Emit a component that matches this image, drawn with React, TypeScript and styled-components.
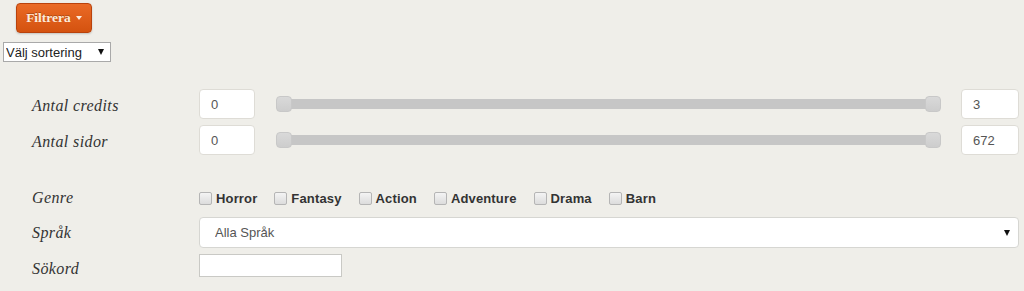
import React from "react";
import styled, { createGlobalStyle } from "styled-components";

const GlobalStyle = createGlobalStyle`
  html, body {
    margin: 0;
    padding: 0;
    background: #efeee9;
  }
`;

const Page = styled.div`
  width: 1024px;
  height: 291px;
  overflow: hidden;
  box-sizing: border-box;
  padding: 3px 5px 0 3px;
`;

const FilterButton = styled.button`
  display: flex;
  align-items: center;
  gap: 5px;
  margin-left: 13px;
  height: 30px;
  width: 76px;
  box-sizing: border-box;
  justify-content: center;
  padding: 0 0 1px;
  border: 1px solid #b9420c;
  border-radius: 4px;
  background: linear-gradient(to bottom, #ea6a26 0%, #d4520f 100%);
  box-shadow: 0 1px 2px rgba(0, 0, 0, 0.18);
  color: #fcebdc;
  font-family: "Liberation Serif", serif;
  font-weight: bold;
  font-size: 13.5px;
  text-shadow: 0 -1px 0 rgba(0, 0, 0, 0.25);
`;

const Caret = styled.span`
  width: 0;
  height: 0;
  border-left: 3.5px solid transparent;
  border-right: 3.5px solid transparent;
  border-top: 4px solid #fcebdc;
`;

const SelectBox = styled.div<{ $wide?: boolean }>`
  display: flex;
  align-items: center;
  box-sizing: border-box;
  background: #fff;
  ${({ $wide }) =>
    $wide
      ? `
    height: 31px;
    border: 1px solid #d6d6d2;
    border-radius: 4px;
    padding: 0 8px 0 15px;
    flex: 1;
  `
      : `
    width: 108px;
    height: 20px;
    margin-top: 9px;
    border: 1px solid #a9a9a9;
    padding: 0 6px 0 2px;
  `}
`;

const NativeSelect = styled.select`
  appearance: none;
  flex: 1;
  border: none;
  outline: none;
  background: transparent;
  padding: 0;
  font-family: "Liberation Sans", Arial, sans-serif;
  font-size: 13px;
  color: #222;
`;

const WideSelect = styled(NativeSelect)`
  color: #555;
`;

const Arrow = styled.span`
  width: 0;
  height: 0;
  border-left: 3px solid transparent;
  border-right: 3px solid transparent;
  border-top: 6px solid #111;
  pointer-events: none;
`;

const Form = styled.div`
  display: flex;
  flex-direction: column;
  gap: 6px;
  margin-top: 27px;
  padding-left: 29px;
`;

const Row = styled.div<{ $height?: number; $gapTop?: number }>`
  display: flex;
  align-items: center;
  height: ${({ $height }) => $height ?? 30}px;
  margin-top: ${({ $gapTop }) => $gapTop ?? 0}px;
`;

const Label = styled.div<{ $shift?: number }>`
  width: 167px;
  flex-shrink: 0;
  font-family: "Liberation Serif", serif;
  font-style: italic;
  font-size: 16px;
  letter-spacing: 0.4px;
  color: #333;
  position: relative;
  top: ${({ $shift }) => $shift ?? 2}px;
`;

const NumberInput = styled.input<{ $w: number }>`
  width: ${({ $w }) => $w}px;
  height: 30px;
  box-sizing: border-box;
  border: 1px solid #dedcd6;
  border-radius: 4px;
  background: #fff;
  padding: 0 11px;
  font-family: "Liberation Sans", Arial, sans-serif;
  font-size: 13px;
  color: #555;
  outline: none;
`;

const Track = styled.div`
  flex: 1;
  margin: 0 20px 0 21px;
  height: 10px;
  background: #c6c6c6;
  border-radius: 3px;
  display: flex;
  align-items: center;
  justify-content: space-between;
`;

const Handle = styled.div`
  width: 16px;
  height: 16px;
  box-sizing: border-box;
  border-radius: 4px;
  background: linear-gradient(to bottom, #d9d9d9, #cdcdcd);
  border: 1px solid #c8c8c8;
`;

const CheckList = styled.div`
  display: flex;
  align-items: center;
`;

const CheckItem = styled.label`
  display: flex;
  align-items: center;
  margin-right: 17px;
  font-family: "Liberation Sans", Arial, sans-serif;
  font-weight: bold;
  font-size: 13px;
  letter-spacing: 0.15px;
  color: #333;
`;

const Box = styled.span`
  width: 11px;
  height: 11px;
  margin: 1px 4px 0 0;
  border: 1px solid #b5b5b5;
  border-radius: 2px;
  background: linear-gradient(to bottom, #f4f4f4, #dcdcdc);
`;

const TextInput = styled.input`
  width: 143px;
  height: 23px;
  box-sizing: border-box;
  border: 1px solid #c9c9c5;
  background: #fff;
  outline: none;
`;

const genres = ["Horror", "Fantasy", "Action", "Adventure", "Drama", "Barn"];

function SliderRow({ label, max }: { label: string; max: number }) {
  return (
    <Row>
      <Label>{label}</Label>
      <NumberInput $w={56} defaultValue="0" />
      <Track>
        <Handle />
        <Handle />
      </Track>
      <NumberInput $w={58} defaultValue={String(max)} />
    </Row>
  );
}

export default function App() {
  return (
    <Page>
      <GlobalStyle />
      <FilterButton>
        Filtrera <Caret />
      </FilterButton>
      <SelectBox>
        <NativeSelect defaultValue="">
          <option value="">Välj sortering</option>
        </NativeSelect>
        <Arrow />
      </SelectBox>
      <Form>
        <SliderRow label="Antal credits" max={3} />
        <SliderRow label="Antal sidor" max={672} />
        <Row $height={26} $gapTop={24}>
          <Label $shift={0}>Genre</Label>
          <CheckList>
            {genres.map((g) => (
              <CheckItem key={g}>
                <Box />
                {g}
              </CheckItem>
            ))}
          </CheckList>
        </Row>
        <Row $height={31}>
          <Label $shift={0}>Språk</Label>
          <SelectBox $wide>
            <WideSelect defaultValue="">
              <option value="">Alla Språk</option>
            </WideSelect>
            <Arrow />
          </SelectBox>
        </Row>
        <Row $height={23}>
          <Label $shift={3}>Sökord</Label>
          <TextInput />
        </Row>
      </Form>
    </Page>
  );
}
